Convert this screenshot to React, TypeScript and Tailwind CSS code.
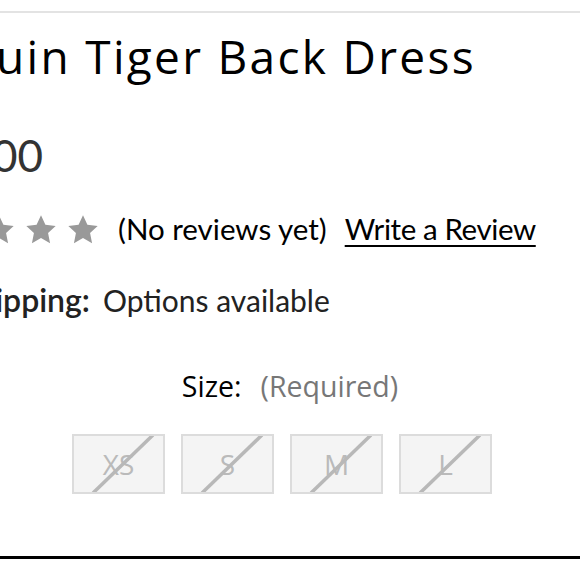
const sizes = ["XS", "S", "M", "L"];

function Star() {
  return (
    <svg width="32" height="31" viewBox="0 0 24 23" className="shrink-0">
      <path
        d="M12 0.8l3.3 7.1 7.7 0.9-5.7 5.3 1.5 7.7L12 17.9l-6.8 3.9 1.5-7.7L1 8.8l7.7-0.9z"
        fill="#999999"
      />
    </svg>
  );
}

export default function App() {
  return (
    <div className="w-[580px] h-[580px] bg-white overflow-hidden flex flex-col">
      <div className="mt-[11px] h-[2px] bg-[#e3e3e3]" />

      <h1
        className="mt-[20px] -ml-[90px] whitespace-nowrap text-[46px] leading-none tracking-[2.3px] text-black"
        style={{ fontFamily: '"Open Sans", sans-serif' }}
      >
        Sequin Tiger Back Dress
      </h1>

      <div
        className="mt-[54px] -ml-[95px] whitespace-nowrap text-[44px] leading-none text-[#333]"
        style={{ fontFamily: "Lato, sans-serif" }}
      >
        $58.00
      </div>

      <div
        className="mt-[36px] -ml-[101px] h-[32px] flex items-center whitespace-nowrap text-[29.5px] leading-none text-black"
        style={{ fontFamily: "Lato, sans-serif" }}
      >
        <div className="flex items-center gap-[10px]">
          <Star />
          <Star />
          <Star />
          <Star />
          <Star />
        </div>
        <span className="ml-[19px]">(No reviews yet)</span>
        <a href="#" className="ml-[18px] tracking-[-0.4px] underline underline-offset-[5px] decoration-2">
          Write a Review
        </a>
      </div>

      <div
        className="mt-[39px] -ml-[40px] h-[32px] flex items-center whitespace-nowrap leading-none text-[#222]"
        style={{ fontFamily: "Lato, sans-serif" }}
      >
        <span className="text-[32px] font-semibold">Shipping:</span>
        <span className="ml-[13px] text-[30px]">Options available</span>
      </div>

      <div
        className="mt-[54px] h-[32px] flex items-center justify-center text-[28.5px] leading-none"
        style={{ fontFamily: '"Open Sans", sans-serif' }}
      >
        <span className="text-black">Size:</span>
        <span className="ml-[19px] text-[#777]">(Required)</span>
      </div>

      <div className="mt-[32px] ml-[72px] flex gap-[16px]">
        {sizes.map((s) => (
          <div
            key={s}
            className="relative w-[93px] h-[60px] border-2 border-[#dcdcdc] bg-[#f4f4f4] flex items-center justify-center text-[28px] text-[#bababa]"
            style={{ fontFamily: '"Open Sans", sans-serif' }}
          >
            {s}
            <svg className="absolute inset-0" width="89" height="56" viewBox="0 0 89 56">
              <line x1="19" y1="57" x2="79" y2="-1" stroke="#b8b8b8" strokeWidth="3.5" />
            </svg>
          </div>
        ))}
      </div>

      <div className="mt-auto mb-[21px] h-[3px] bg-black" />
    </div>
  );
}
